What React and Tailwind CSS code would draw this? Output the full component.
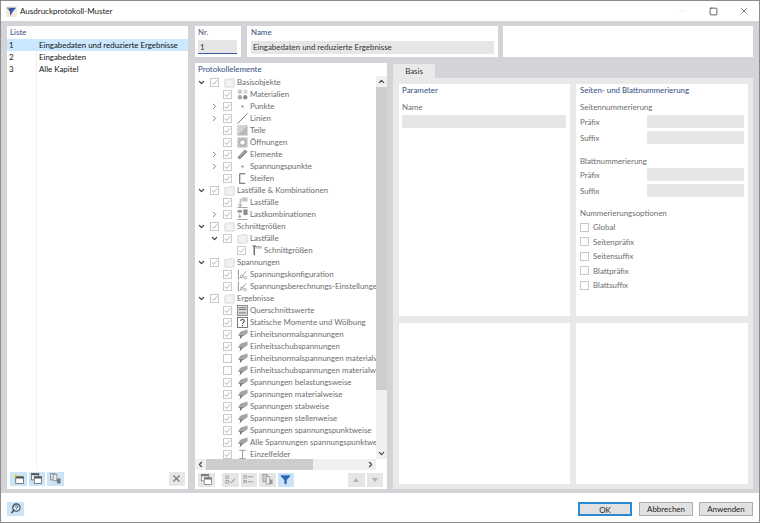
import React from 'react';
import { ChevronDown, ChevronRight, ChevronUp, ChevronLeft, X, Square, Minus, Filter } from 'lucide-react';

const Cb = ({ on = true, className = '' }) => (
  <span className={`flex h-[9px] w-[9px] shrink-0 items-center justify-center border border-[#c8c8c8] bg-white ${className}`}>
    {on && (
      <svg viewBox="0 0 8 8" className="h-[7px] w-[7px]">
        <path d="M1 4.2 3 6.2 7 1.5" fill="none" stroke="#9c9c9c" strokeWidth="0.9" />
      </svg>
    )}
  </span>
);

const Svg = ({ children }) => (
  <svg viewBox="0 0 12 12" className="h-[11px] w-[11px] shrink-0">{children}</svg>
);

const icons = {
  folder: (
    <Svg>
      <path d="M1 3h3.5l1-1H11v9H1z" fill="#f2f2f2" stroke="#d4d4d4" strokeWidth="0.9" />
    </Svg>
  ),
  material: (
    <Svg>
      <circle cx="3.2" cy="3" r="2.4" fill="#c8c8c8" />
      <rect x="7" y="0.8" width="4.4" height="4.4" fill="#d8d8d8" />
      <circle cx="3.2" cy="9" r="2.4" fill="#a8a8a8" />
      <circle cx="9" cy="9" r="2.4" fill="#8c8c8c" />
    </Svg>
  ),
  point: (
    <Svg>
      <rect x="5" y="5" width="2" height="2" fill="#808080" />
    </Svg>
  ),
  line: (
    <Svg>
      <path d="M0.5 11.5 11.5 0.5" stroke="#707070" strokeWidth="1" />
    </Svg>
  ),
  part: (
    <Svg>
      <rect x="0.5" y="0.5" width="11" height="11" fill="#b8b8b8" />
      <path d="M0.5 0.5h11l-11 11z" fill="#d4d4d4" />
    </Svg>
  ),
  opening: (
    <Svg>
      <rect x="0.5" y="0.5" width="11" height="11" fill="#c0c0c0" />
      <circle cx="6" cy="6" r="3" fill="#fff" stroke="#8c8c8c" strokeWidth="0.8" />
    </Svg>
  ),
  element: (
    <Svg>
      <path d="M0.5 9 8.5 0.5 11.5 3 3 11.5z" fill="#8a8a8a" />
      <path d="M2.5 8.5 9 2.5" stroke="#d4d4d4" strokeWidth="0.7" />
    </Svg>
  ),
  stiffener: (
    <Svg>
      <path d="M3 0.8H9M3 0.8v10.4H9" stroke="#606060" strokeWidth="1.1" fill="none" />
    </Svg>
  ),
  loadcase: (
    <Svg>
      <rect x="5" y="0.5" width="6.5" height="4.5" fill="#c4c4c4" />
      <path d="M3.5 2v8M1.5 8l2 2.5 2-2.5M0.5 11.5h11" stroke="#808080" strokeWidth="0.8" fill="none" />
    </Svg>
  ),
  loadcombo: (
    <Svg>
      <rect x="0.5" y="1" width="5" height="3" fill="#a0a0a0" />
      <rect x="7" y="0.5" width="4.5" height="6" fill="#8c8c8c" />
      <path d="M3 5v4M1.5 7.5 3 9.5l1.5-2M0.5 11.5h11" stroke="#808080" strokeWidth="0.8" fill="none" />
    </Svg>
  ),
  result: (
    <Svg>
      <path d="M5 1h6.5v3H10V2.5H9V4H7.5V2.5h-1V4H5z" fill="#b0b0b0" />
      <path d="M3.5 0.8v10.5" stroke="#505050" strokeWidth="1.3" />
      <path d="M1.5 1h4" stroke="#505050" strokeWidth="0.9" />
    </Svg>
  ),
  config: (
    <Svg>
      <path d="M1.5 0.5v11" stroke="#707070" strokeWidth="0.8" />
      <path d="M3 10.5 10 2.5" stroke="#909090" strokeWidth="0.9" />
      <circle cx="5.3" cy="8" r="1.4" fill="#fff" stroke="#707070" strokeWidth="0.7" />
      <circle cx="9" cy="9.5" r="1.4" fill="#fff" stroke="#909090" strokeWidth="0.7" />
    </Svg>
  ),
  section: (
    <Svg>
      <rect x="0.5" y="0.5" width="11" height="11" fill="#dcdcdc" stroke="#707070" strokeWidth="0.8" />
      <path d="M2 3h8M2 5h8" stroke="#606060" strokeWidth="0.9" />
      <path d="M2 8.5h8" stroke="#a0a0a0" strokeWidth="1.8" />
    </Svg>
  ),
  question: (
    <Svg>
      <rect x="0.5" y="0.5" width="11" height="11" fill="#fff" stroke="#606060" strokeWidth="0.9" />
      <path d="M4 4.4c0-2.4 4-2.4 4 0 0 1.5-2 1.6-2 3.2M6 8.6v1.4" stroke="#404040" strokeWidth="1.1" fill="none" />
    </Svg>
  ),
  stress: (
    <Svg>
      <path d="M3.5 3 11.5 0.5v4L7 7.5H1z" fill="#a4a4a4" />
      <path d="M3.5 7h3.5L4.5 9.5 3 11.5z" fill="#707070" />
    </Svg>
  ),
  ibeam: (
    <Svg>
      <path d="M2.5 1.5h7M2.5 10.5h7M6 1.5v9" stroke="#8c8c8c" strokeWidth="0.9" />
    </Svg>
  ),
};

// level, arrow (down/right/null), icon, label, checked
const tree = [
  [0, 'down', 'folder', 'Basisobjekte'],
  [1, null, 'material', 'Materialien'],
  [1, 'right', 'point', 'Punkte'],
  [1, 'right', 'line', 'Linien'],
  [1, null, 'part', 'Teile'],
  [1, null, 'opening', 'Öffnungen'],
  [1, 'right', 'element', 'Elemente'],
  [1, 'right', 'point', 'Spannungspunkte'],
  [1, null, 'stiffener', 'Steifen'],
  [0, 'down', 'folder', 'Lastfälle & Kombinationen'],
  [1, null, 'loadcase', 'Lastfälle'],
  [1, 'right', 'loadcombo', 'Lastkombinationen'],
  [0, 'down', 'folder', 'Schnittgrößen'],
  [1, 'down', 'folder', 'Lastfälle'],
  [2, null, 'result', 'Schnittgrößen'],
  [0, 'down', 'folder', 'Spannungen'],
  [1, null, 'config', 'Spannungskonfiguration'],
  [1, null, 'config', 'Spannungsberechnungs-Einstellungen'],
  [0, 'down', 'folder', 'Ergebnisse'],
  [1, null, 'section', 'Querschnittswerte'],
  [1, null, 'question', 'Statische Momente und Wölbung'],
  [1, null, 'stress', 'Einheitsnormalspannungen'],
  [1, null, 'stress', 'Einheitsschubspannungen'],
  [1, null, 'stress', 'Einheitsnormalspannungen materialweise', false],
  [1, null, 'stress', 'Einheitsschubspannungen materialweise', false],
  [1, null, 'stress', 'Spannungen belastungsweise'],
  [1, null, 'stress', 'Spannungen materialweise'],
  [1, null, 'stress', 'Spannungen stabweise'],
  [1, null, 'stress', 'Spannungen stellenweise'],
  [1, null, 'stress', 'Spannungen spannungspunktweise'],
  [1, null, 'stress', 'Alle Spannungen spannungspunktweise'],
  [1, null, 'ibeam', 'Einzelfelder'],
];

const levelPad = ['pl-0', 'pl-[13px]', 'pl-[27px]'];

const TreeRow = ({ row }) => {
  const [level, arrow, icon, label, checked = true] = row;
  return (
    <div className={`flex h-[12px] items-center whitespace-nowrap ${levelPad[level]}`}>
      <span className="flex w-[12px] shrink-0 items-center justify-center">
        {arrow === 'down' && <ChevronDown className="h-[9px] w-[9px] text-[#333]" strokeWidth={3} />}
        {arrow === 'right' && <ChevronRight className="h-[9px] w-[9px] text-[#777]" strokeWidth={2.5} />}
      </span>
      <Cb on={checked} className="ml-[3px]" />
      <span className="ml-[5px] mr-[2px]">{icons[icon]}</span>
      <span className="text-[#6e6e6e]">{label}</span>
    </div>
  );
};

const ToolBtn = ({ children, active, className = '' }) => (
  <span className={`flex h-[14px] w-[16.5px] items-center justify-center ${active ? 'bg-[#cce4f7]' : 'bg-[#e6e6e6]'} ${className}`}>
    {children}
  </span>
);

const WinIcon = ({ stroke = '#555' }) => (
  <svg viewBox="0 0 12 12" className="h-[11px] w-[11px]">
    <rect x="0.5" y="0.5" width="8" height="7" fill="#fff" stroke={stroke} strokeWidth="0.8" />
    <rect x="0.5" y="0.5" width="8" height="2" fill={stroke} />
    <rect x="3.5" y="4" width="8" height="7.5" fill="#fff" stroke={stroke} strokeWidth="0.8" />
    <rect x="3.5" y="4" width="8" height="2" fill={stroke} />
  </svg>
);

const Field = ({ label }) => (
  <div className="flex h-[13px] items-center justify-between">
    <span className="text-[#6e6e6e]">{label}</span>
    <span className="h-[13px] w-[97px] bg-[#e6e6e6]" />
  </div>
);

export default function App() {
  return (
    <div className="flex h-[523px] w-[760px] flex-col overflow-hidden whitespace-nowrap border border-[#8c8c8c] bg-white font-['Lato',sans-serif] text-[7.9px] leading-[12px] text-[#333]">
      {/* title bar */}
      <div className="flex h-[20px] shrink-0 items-center pl-[5px]">
        <svg viewBox="0 0 12 12" className="h-[11px] w-[11px]">
          <rect x="0" y="0" width="12" height="12" fill="#f0ece4" />
          <path d="M1 2h10L7 6.5H4.5z" fill="#2f55b8" />
          <path d="M4.5 6.5H7L4.5 11z" fill="#5a2a8a" />
          <path d="M1 2h3L3 4z" fill="#e88a2a" />
        </svg>
        <span className="ml-[3px] text-[8px] text-[#222]">Ausdruckprotokoll-Muster</span>
        <div className="ml-auto flex items-center">
          <Minus className="mr-[21px] h-[10px] w-[10px] text-[#ccc]" strokeWidth={1} />
          <Square className="mr-[21px] h-[9px] w-[9px] text-[#333]" strokeWidth={2} />
          <X className="mr-[10px] h-[10px] w-[10px] text-[#333]" strokeWidth={1.5} />
        </div>
      </div>

      {/* main area */}
      <div className="flex min-h-0 flex-1 gap-[7px] bg-[#d3d3d8] pb-[4px] pl-[6px] pr-[6px] pt-[5px]">
        {/* list */}
        <div className="flex w-[181px] shrink-0 flex-col bg-white">
          <div className="h-[13px] pl-[3px] font-medium leading-[13px] text-[#44588c]">Liste</div>
          <div className="relative flex-1">
            <div className="absolute bottom-0 left-[29px] top-0 w-px bg-[#f0f0f0]" />
            <div className="relative flex h-[12px] items-center bg-[#cce8ff] text-[#111]"><span className="w-[32px] pl-[2px]">1</span>Eingabedaten und reduzierte Ergebnisse</div>
            <div className="relative flex h-[12px] items-center text-[#111]"><span className="w-[32px] pl-[2px]">2</span>Eingabedaten</div>
            <div className="relative flex h-[12px] items-center text-[#111]"><span className="w-[32px] pl-[2px]">3</span>Alle Kapitel</div>
          </div>
          <div className="relative flex h-[19px] items-center gap-[2px] px-[3px] pb-[2px]">
            <ToolBtn active>
              <svg viewBox="0 0 12 12" className="h-[11px] w-[11px]">
                <rect x="3" y="4" width="8.5" height="7.5" fill="#fff" stroke="#555" strokeWidth="0.8" />
                <rect x="3" y="4" width="8.5" height="2" fill="#555" />
                <path d="M3 0.5l.7 1.6 1.6.7-1.6.7L3 5.2l-.7-1.7L.7 2.8l1.6-.7z" fill="#f4d224" />
              </svg>
            </ToolBtn>
            <ToolBtn active><WinIcon /></ToolBtn>
            <ToolBtn active>
              <svg viewBox="0 0 12 12" className="h-[11px] w-[11px]">
                <rect x="0.5" y="0.5" width="5" height="7" fill="#ddd" stroke="#777" strokeWidth="0.7" />
                <rect x="3.5" y="1.5" width="4" height="7" fill="#eee" stroke="#777" strokeWidth="0.7" />
                <rect x="7.5" y="6" width="4" height="5.5" rx="1" fill="#777" />
              </svg>
            </ToolBtn>
            <ToolBtn className="ml-auto">
              <X className="h-[11px] w-[11px] text-[#777]" strokeWidth={2.5} />
            </ToolBtn>
          </div>
        </div>

        {/* right of list */}
        <div className="flex min-w-0 flex-1 flex-col gap-[6px]">
          {/* top row */}
          <div className="flex h-[31px] shrink-0">
            <div className="w-[46px] bg-white px-[3px]">
              <div className="h-[13px] font-medium leading-[13px] text-[#55627f]">Nr.</div>
              <div className="mt-[1px] h-[14px] w-[39px] border-b border-[#3b5aa0] bg-[#e6e6e6] pl-[2px] leading-[14px]">1</div>
            </div>
            <div className="ml-[6px] w-[251px] bg-white px-[4px]">
              <div className="h-[13px] font-medium leading-[13px] text-[#44588c]">Name</div>
              <div className="mt-[2px] h-[13px] bg-[#e6e6e6] pl-[2px] leading-[13px]">Eingabedaten und reduzierte Ergebnisse</div>
            </div>
            <div className="ml-[5px] min-w-0 flex-1 bg-white" />
          </div>

          <div className="flex min-h-0 flex-1 gap-[6px]">
            {/* tree panel */}
            <div className="flex w-[192px] shrink-0 flex-col bg-white">
              <div className="h-[13px] pl-[3px] font-medium leading-[13px] text-[#44588c]">Protokollelemente</div>
              <div className="flex min-h-0 flex-1">
                <div className="flex min-w-0 flex-1 flex-col">
                  <div className="min-h-0 flex-1 overflow-hidden">
                    {tree.map((row, i) => <TreeRow key={i} row={row} />)}
                  </div>
                  {/* horizontal scrollbar */}
                  <div className="flex h-[11px] shrink-0 items-center bg-[#f0f0f0]">
                    <ChevronLeft className="h-[9px] w-[11px] text-[#444]" strokeWidth={3} />
                    <span className="h-[11px] w-[107px] bg-[#cdcdcd]" />
                    <span className="flex-1" />
                    <ChevronRight className="h-[9px] w-[11px] text-[#444]" strokeWidth={3} />
                  </div>
                </div>
                {/* vertical scrollbar */}
                <div className="flex w-[11px] shrink-0 flex-col items-center bg-[#f0f0f0]">
                  <ChevronUp className="h-[11px] w-[9px] shrink-0 text-[#444]" strokeWidth={3} />
                  <span className="h-[303px] w-[11px] bg-[#cdcdcd]" />
                  <span className="flex-1" />
                  <ChevronDown className="h-[11px] w-[9px] shrink-0 text-[#444]" strokeWidth={3} />
                  <span className="h-[11px] w-[11px] shrink-0 bg-white" />
                </div>
              </div>
              <div className="flex h-[19px] shrink-0 items-center gap-[2px] pl-[3px] pr-[4px]">
                <ToolBtn><WinIcon stroke="#777" /></ToolBtn>
                <ToolBtn className="ml-[5.5px]">
                  <svg viewBox="0 0 12 12" className="h-[11px] w-[11px]">
                    <rect x="1" y="2" width="3" height="3" fill="none" stroke="#888" strokeWidth="0.7" />
                    <rect x="1" y="7" width="3" height="3" fill="none" stroke="#888" strokeWidth="0.7" />
                    <path d="M5.5 8l1.5 1.5L11 5" stroke="#777" strokeWidth="0.9" fill="none" />
                  </svg>
                </ToolBtn>
                <ToolBtn>
                  <svg viewBox="0 0 12 12" className="h-[11px] w-[11px]">
                    <rect x="1" y="2" width="3" height="2.5" fill="none" stroke="#888" strokeWidth="0.7" />
                    <rect x="1" y="7" width="3" height="2.5" fill="none" stroke="#888" strokeWidth="0.7" />
                    <path d="M5.5 3h5.5M5.5 8.5h5.5" stroke="#888" strokeWidth="0.8" />
                  </svg>
                </ToolBtn>
                <ToolBtn>
                  <svg viewBox="0 0 12 12" className="h-[11px] w-[11px]">
                    <rect x="1" y="0.5" width="5" height="8" fill="#ccc" stroke="#888" strokeWidth="0.7" />
                    <rect x="4.5" y="3" width="4" height="8" fill="#eee" stroke="#888" strokeWidth="0.7" />
                    <rect x="8.5" y="6" width="3" height="5" fill="#999" />
                  </svg>
                </ToolBtn>
                <ToolBtn active><Filter className="h-[11px] w-[11px] fill-[#2a65b0] text-[#2a65b0]" strokeWidth={1} /></ToolBtn>
                <ToolBtn className="ml-auto"><span className="h-0 w-0 border-x-[3px] border-b-[4px] border-x-transparent border-b-[#b0b0b0]" /></ToolBtn>
                <ToolBtn><span className="h-0 w-0 border-x-[3px] border-t-[4px] border-x-transparent border-t-[#b0b0b0]" /></ToolBtn>
              </div>
            </div>

            {/* tab area */}
            <div className="flex min-w-0 flex-1 flex-col pt-[1px]">
              <div className="flex h-[14px] w-[42px] shrink-0 items-center justify-center bg-[#e9e9e9] text-[#333]">Basis</div>
              <div className="grid min-h-0 flex-1 grid-cols-[171px_172px] grid-rows-[232px_1fr] gap-x-[6px] gap-y-[7px] bg-[#e9e9e9] pb-[5px] pl-[6px] pt-[6px]">
                <div className="bg-white pl-[3px] pr-[4px]">
                  <div className="h-[13px] font-medium leading-[13px] text-[#44588c]">Parameter</div>
                  <div className="mt-[4px] text-[#6e6e6e]">Name</div>
                  <div className="mt-[2px] h-[13px] bg-[#e6e6e6]" />
                </div>
                <div className="bg-white pl-[4px] pr-[4px]">
                  <div className="h-[13px] font-medium leading-[13px] text-[#44588c]">Seiten- und Blattnummerierung</div>
                  <div className="mt-[4px] text-[#6e6e6e]">Seitennummerierung</div>
                  <div className="mt-[2px] flex flex-col gap-[3px]">
                    <Field label="Präfix" />
                    <Field label="Suffix" />
                  </div>
                  <div className="mt-[11px] text-[#6e6e6e]">Blattnummerierung</div>
                  <div className="mt-[1px] flex flex-col gap-[3px]">
                    <Field label="Präfix" />
                    <Field label="Suffix" />
                  </div>
                  <div className="mt-[10px] text-[#6e6e6e]">Nummerierungsoptionen</div>
                  <div className="mt-[1px] flex flex-col">
                    {['Global', 'Seitenpräfix', 'Seitensuffix', 'Blattpräfix', 'Blattsuffix'].map((t) => (
                      <div key={t} className="flex h-[14.5px] items-center gap-[4px] text-[#6e6e6e]">
                        <Cb on={false} />
                        {t}
                      </div>
                    ))}
                  </div>
                </div>
                <div className="bg-white" />
                <div className="bg-white" />
              </div>
            </div>
          </div>
        </div>
      </div>

      {/* footer */}
      <div className="flex h-[29px] shrink-0 items-center bg-white pl-[6px] pr-[6px] pt-[2px]">
        <span className="flex h-[14px] w-[16.5px] items-center justify-center bg-[#cce4f7]">
          <svg viewBox="0 0 12 12" className="h-[11px] w-[11px]">
            <circle cx="7" cy="5" r="4" fill="none" stroke="#444" strokeWidth="1.2" />
            <path d="M5.6 4c.2-1.6 2.9-1.5 2.9 0 0 1-1.5 1-1.5 2.2" stroke="#444" strokeWidth="1" fill="none" />
            <path d="M4.2 8 1.5 11" stroke="#444" strokeWidth="1.5" />
          </svg>
        </span>
        <button className="ml-auto h-[14px] w-[54px] border-2 border-[#2a8ad4] bg-[#e1e1e1] text-[#222]">OK</button>
        <button className="ml-[7px] h-[14px] w-[54px] border border-[#adadad] bg-[#e1e1e1] text-[#222]">Abbrechen</button>
        <button className="ml-[6px] h-[14px] w-[54px] border border-[#adadad] bg-[#e1e1e1] text-[#222]">Anwenden</button>
      </div>
    </div>
  );
}
